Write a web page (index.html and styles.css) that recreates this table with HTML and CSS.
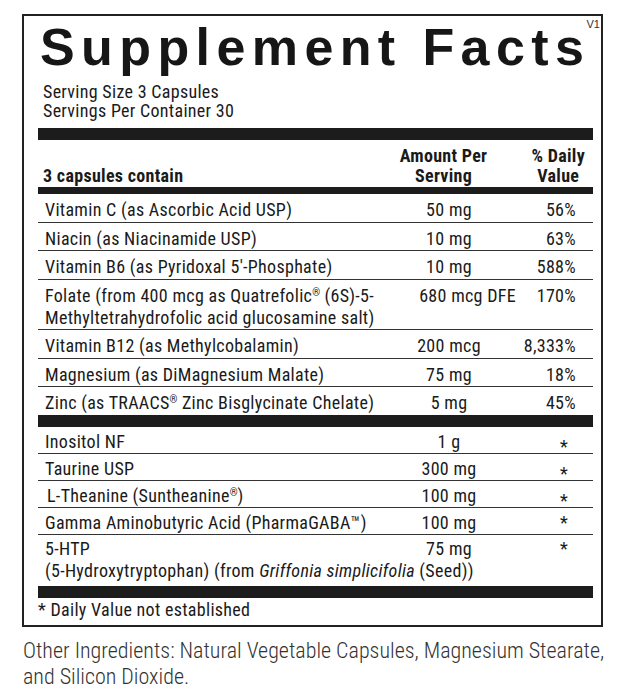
FILE: index.html
```html
<!DOCTYPE html>
<html lang="en">
<head>
<meta charset="utf-8">
<title>Supplement Facts</title>
<link rel="stylesheet" href="styles.css">
</head>
<body>
<div class="page">
  <section class="facts">
    <span class="version">V1</span>
    <h1 class="title">Supplement Fact<span class="last">s</span></h1>
    <p class="serving">Serving Size 3 Capsules<br>Servings Per Container 30</p>
    <div class="bar bar-thick"></div>
    <div class="head">
      <div class="head-name">3 capsules contain</div>
      <div class="head-amt">Amount Per<br>Serving</div>
      <div class="head-dv">% Daily<br>Value</div>
    </div>
    <div class="bar bar-mid"></div>
    <div class="group group-a">
      <div class="row"><span class="name">Vitamin C (as Ascorbic Acid USP)</span><span class="amt">50 mg</span><span class="dv">56%</span></div>
      <div class="row"><span class="name">Niacin (as Niacinamide USP)</span><span class="amt">10 mg</span><span class="dv">63%</span></div>
      <div class="row"><span class="name">Vitamin B6 (as Pyridoxal 5'-Phosphate)</span><span class="amt">10 mg</span><span class="dv">588%</span></div>
      <div class="row"><span class="name">Folate (from 400 mcg as Quatrefolic<sup class="reg">®</sup> (6S)-5-<br>Methyltetrahydrofolic acid glucosamine salt)</span><span class="amt amt-wide">680 mcg DFE</span><span class="dv">170%</span></div>
      <div class="row"><span class="name">Vitamin B12 (as Methylcobalamin)</span><span class="amt">200 mcg</span><span class="dv">8,333%</span></div>
      <div class="row"><span class="name">Magnesium (as DiMagnesium Malate)</span><span class="amt">75 mg</span><span class="dv">18%</span></div>
      <div class="row"><span class="name">Zinc (as TRAACS<sup class="reg">®</sup> Zinc Bisglycinate Chelate)</span><span class="amt">5 mg</span><span class="dv">45%</span></div>
    </div>
    <div class="bar bar-thick"></div>
    <div class="group group-b">
      <div class="row"><span class="name">Inositol NF</span><span class="amt">1 g</span><span class="dv star low">*</span></div>
      <div class="row"><span class="name">Taurine USP</span><span class="amt">300 mg</span><span class="dv star low">*</span></div>
      <div class="row"><span class="name indent">L-Theanine (Suntheanine<sup class="reg">®</sup>)</span><span class="amt">100 mg</span><span class="dv star low">*</span></div>
      <div class="row"><span class="name">Gamma Aminobutyric Acid (PharmaGABA™)</span><span class="amt">100 mg</span><span class="dv star">*</span></div>
      <div class="row row-htp"><span class="name">5-HTP</span><span class="amt">75 mg</span><span class="dv star">*</span><span class="sub">(5-Hydroxytryptophan) (from <i>Griffonia simplicifolia</i> (Seed))</span></div>
    </div>
    <div class="bar bar-thick"></div>
    <p class="note">* Daily Value not established</p>
  </section>
  <p class="other">Other Ingredients: Natural Vegetable Capsules, Magnesium Stearate,<br>and Silicon Dioxide.</p>
</div>
</body>
</html>
```
FILE: styles.css
```css
body {
  margin: 0;
  background: #fff;
  color: #1a1a1a;
  font-family: "Roboto Condensed", Roboto, "Liberation Sans", sans-serif;
  font-stretch: condensed;
  font-size: 18px;
  letter-spacing: 0.3px;
}

.page {
  padding: 14px 17px 0 22px;
}

.facts {
  position: relative;
  border: 2px solid #222;
  padding: 13px 8px 0 14px;
}

.version {
  position: absolute;
  top: 4px;
  right: 1px;
  font-family: "Liberation Sans", Arial, sans-serif;
  font-stretch: normal;
  font-size: 11px;
  line-height: 8px;
  letter-spacing: 0;
  color: #333;
}

.title {
  margin: 0;
  padding-left: 2px;
  font-family: "Liberation Sans", Arial, sans-serif;
  font-stretch: normal;
  font-weight: bold;
  font-size: 52px;
  line-height: 36px;
  letter-spacing: 6.4px;
  white-space: nowrap;
  color: #161616;
}

.last {
  letter-spacing: 0;
}

.serving {
  margin: 16.5px 0 7.8px;
  padding-left: 5px;
  line-height: 19.5px;
}

.bar {
  background: #1c1c1c;
}

.bar-thick {
  height: 12px;
}

.bar-mid {
  height: 7px;
}

.head {
  display: grid;
  grid-template-columns: 1fr 110px 72px;
  padding: 6px 18px 1px 5px;
  font-weight: bold;
  line-height: 20px;
}

.head-name {
  align-self: end;
}

.head-amt {
  text-align: center;
  padding-right: 9px;
}

.head-dv {
  justify-self: end;
  margin-right: -10px;
  text-align: center;
}

.row {
  display: grid;
  grid-template-columns: 1fr 110px 72px;
  padding: 5px 17px 0.5px 7px;
  line-height: 22px;
  border-bottom: 1px solid #333;
}

.row:last-child {
  border-bottom: 0;
}

.group-b .row {
  padding-top: 4px;
  padding-bottom: 0;
}

.group-b .row-htp {
  padding-top: 3px;
  padding-bottom: 4px;
}

.name {
  white-space: nowrap;
}

.indent {
  padding-left: 2px;
}

.amt {
  text-align: center;
  white-space: nowrap;
}

.amt-wide {
  text-align: right;
  margin-right: -12px;
}

.dv {
  text-align: right;
  white-space: nowrap;
}

.star {
  padding-right: 8px;
}

.low {
  margin-top: 5px;
  margin-bottom: -5px;
}

.sub {
  grid-column: 1 / -1;
  white-space: nowrap;
}

.reg {
  font-size: 10px;
  line-height: 0;
  vertical-align: 6px;
  letter-spacing: 0;
}

.note {
  margin: 0;
  padding: 1px 0 4px;
  line-height: 22px;
}

.other {
  margin: 11.5px 0 0;
  padding-left: 1px;
  font-size: 22px;
  font-weight: 300;
  line-height: 26px;
  letter-spacing: 0;
  white-space: nowrap;
  color: #333;
}
```
